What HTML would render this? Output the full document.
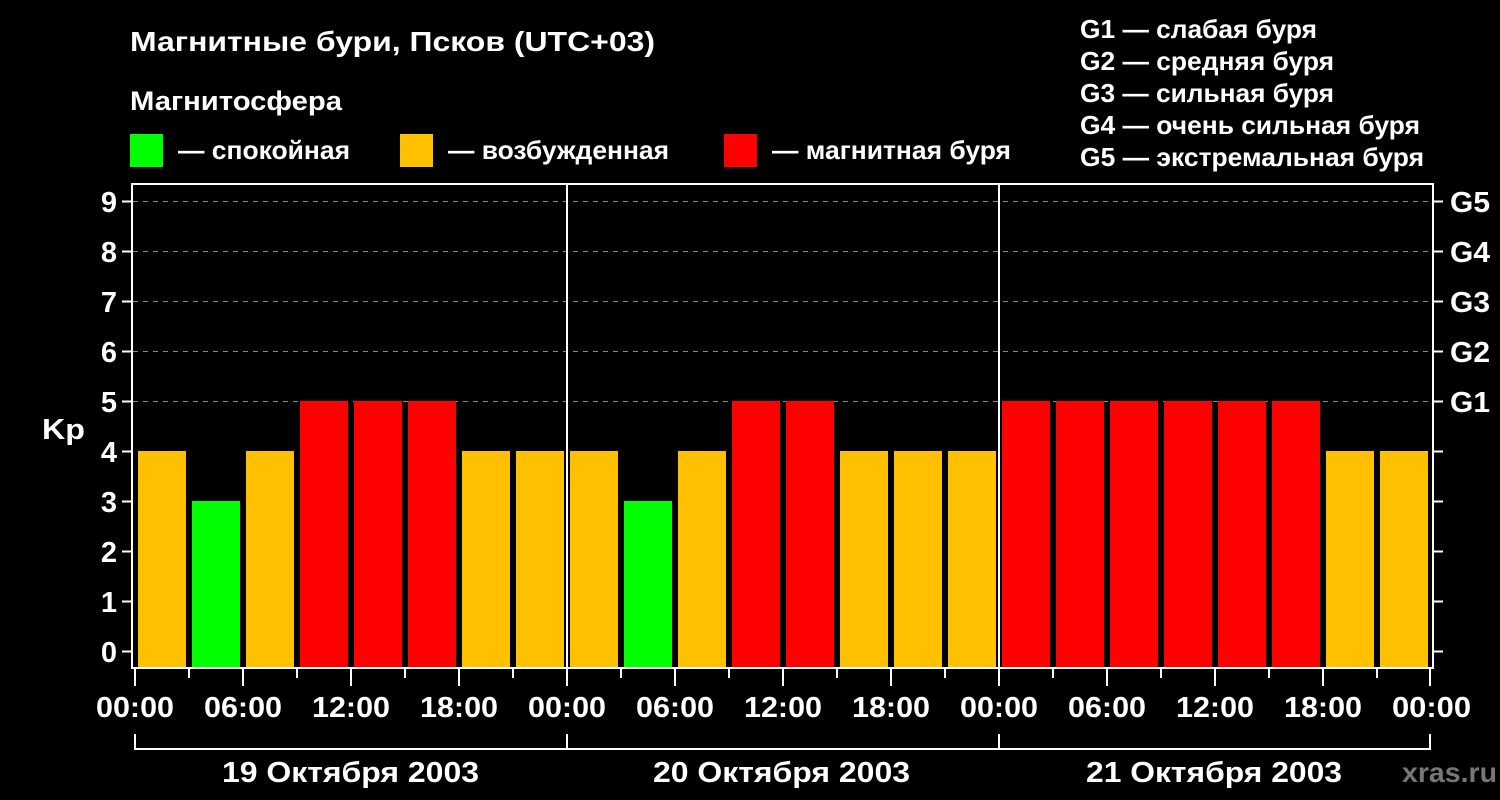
<!DOCTYPE html>
<html><head><meta charset="utf-8"><style>
html,body{margin:0;padding:0;background:#000;}
svg{display:block;font-family:"Liberation Sans",Arial,sans-serif;font-weight:bold;}
</style></head><body>
<svg width="1500" height="800" viewBox="0 0 1500 800" xmlns="http://www.w3.org/2000/svg">
<rect width="1500" height="800" fill="#000"/>
<g fill="#fff">
<text x="130" y="51" font-size="28" textLength="525" lengthAdjust="spacingAndGlyphs">Магнитные бури, Псков (UTC+03)</text>
<text x="130" y="110" font-size="27" textLength="212" lengthAdjust="spacingAndGlyphs">Магнитосфера</text>
<text x="178" y="159" font-size="26" textLength="172" lengthAdjust="spacingAndGlyphs">— спокойная</text>
<text x="448" y="159" font-size="26" textLength="221" lengthAdjust="spacingAndGlyphs">— возбужденная</text>
<text x="772" y="159" font-size="26" textLength="239" lengthAdjust="spacingAndGlyphs">— магнитная буря</text>
<g font-size="26">
<text x="1080" y="38" textLength="237" lengthAdjust="spacingAndGlyphs">G1 — слабая буря</text>
<text x="1080" y="70" textLength="254" lengthAdjust="spacingAndGlyphs">G2 — средняя буря</text>
<text x="1080" y="102" textLength="254" lengthAdjust="spacingAndGlyphs">G3 — сильная буря</text>
<text x="1080" y="134" textLength="340" lengthAdjust="spacingAndGlyphs">G4 — очень сильная буря</text>
<text x="1080" y="166" textLength="344" lengthAdjust="spacingAndGlyphs">G5 — экстремальная буря</text>
</g>
</g>
<rect x="130" y="134" width="33" height="33" fill="#00ff00"/>
<rect x="400" y="134" width="33" height="33" fill="#ffc000"/>
<rect x="724" y="134" width="33" height="33" fill="#ff0000"/>
<g stroke="#888" stroke-width="1" stroke-dasharray="5,5">
<line x1="133" y1="201.5" x2="1432" y2="201.5"/>
<line x1="133" y1="251.5" x2="1432" y2="251.5"/>
<line x1="133" y1="301.5" x2="1432" y2="301.5"/>
<line x1="133" y1="351.5" x2="1432" y2="351.5"/>
<line x1="133" y1="401.5" x2="1432" y2="401.5"/>
</g>
<g>
<rect x="138" y="451" width="48" height="216" fill="#ffc000"/>
<rect x="192" y="501" width="48" height="166" fill="#00ff00"/>
<rect x="246" y="451" width="48" height="216" fill="#ffc000"/>
<rect x="300" y="401" width="48" height="266" fill="#ff0000"/>
<rect x="354" y="401" width="48" height="266" fill="#ff0000"/>
<rect x="408" y="401" width="48" height="266" fill="#ff0000"/>
<rect x="462" y="451" width="48" height="216" fill="#ffc000"/>
<rect x="516" y="451" width="48" height="216" fill="#ffc000"/>
<rect x="570" y="451" width="48" height="216" fill="#ffc000"/>
<rect x="624" y="501" width="48" height="166" fill="#00ff00"/>
<rect x="678" y="451" width="48" height="216" fill="#ffc000"/>
<rect x="732" y="401" width="48" height="266" fill="#ff0000"/>
<rect x="786" y="401" width="48" height="266" fill="#ff0000"/>
<rect x="840" y="451" width="48" height="216" fill="#ffc000"/>
<rect x="894" y="451" width="48" height="216" fill="#ffc000"/>
<rect x="948" y="451" width="48" height="216" fill="#ffc000"/>
<rect x="1002" y="401" width="48" height="266" fill="#ff0000"/>
<rect x="1056" y="401" width="48" height="266" fill="#ff0000"/>
<rect x="1110" y="401" width="48" height="266" fill="#ff0000"/>
<rect x="1164" y="401" width="48" height="266" fill="#ff0000"/>
<rect x="1218" y="401" width="48" height="266" fill="#ff0000"/>
<rect x="1272" y="401" width="48" height="266" fill="#ff0000"/>
<rect x="1326" y="451" width="48" height="216" fill="#ffc000"/>
<rect x="1380" y="451" width="48" height="216" fill="#ffc000"/>
</g>
<g stroke="#fff" stroke-width="2" fill="none">
<rect x="132" y="184" width="1301" height="484"/>
<line x1="567" y1="184" x2="567" y2="668"/>
<line x1="999" y1="184" x2="999" y2="668"/>
<path d="M122 201.5H132M122 251.5H132M122 301.5H132M122 351.5H132M122 401.5H132M122 451.5H132M122 501.5H132M122 551.5H132M122 601.5H132M122 651.5H132"/>
<path d="M1433 201.5H1443M1433 251.5H1443M1433 301.5H1443M1433 351.5H1443M1433 401.5H1443M1433 451.5H1443M1433 501.5H1443M1433 551.5H1443M1433 601.5H1443M1433 651.5H1443"/>
<path d="M135 668V686M243 668V686M351 668V686M459 668V686M567 668V686M675 668V686M783 668V686M891 668V686M999 668V686M1107 668V686M1215 668V686M1323 668V686M1430 668V686"/>
<path d="M189 668V678M297 668V678M405 668V678M513 668V678M621 668V678M729 668V678M837 668V678M945 668V678M1053 668V678M1161 668V678M1269 668V678M1377 668V678"/>
<path d="M135 734V750M567 734V750M999 734V750M1430 734V750M135 749H1430"/>
</g>
<g fill="#fff" font-size="29" text-anchor="end">
<text x="117" y="212">9</text><text x="117" y="262">8</text><text x="117" y="312">7</text>
<text x="117" y="362">6</text><text x="117" y="412">5</text><text x="117" y="462">4</text>
<text x="117" y="512">3</text><text x="117" y="562">2</text><text x="117" y="612">1</text>
<text x="117" y="662">0</text>
</g>
<text x="42" y="439" fill="#fff" font-size="29" textLength="43" lengthAdjust="spacingAndGlyphs">Kp</text>
<g fill="#fff" font-size="29">
<text x="1450" y="212" textLength="40" lengthAdjust="spacingAndGlyphs">G5</text>
<text x="1450" y="262" textLength="40" lengthAdjust="spacingAndGlyphs">G4</text>
<text x="1450" y="312" textLength="40" lengthAdjust="spacingAndGlyphs">G3</text>
<text x="1450" y="362" textLength="40" lengthAdjust="spacingAndGlyphs">G2</text>
<text x="1450" y="412" textLength="40" lengthAdjust="spacingAndGlyphs">G1</text>
</g>
<g fill="#fff" font-size="29">
<text x="96" y="717" textLength="78" lengthAdjust="spacingAndGlyphs">00:00</text>
<text x="204" y="717" textLength="78" lengthAdjust="spacingAndGlyphs">06:00</text>
<text x="312" y="717" textLength="78" lengthAdjust="spacingAndGlyphs">12:00</text>
<text x="420" y="717" textLength="78" lengthAdjust="spacingAndGlyphs">18:00</text>
<text x="528" y="717" textLength="78" lengthAdjust="spacingAndGlyphs">00:00</text>
<text x="636" y="717" textLength="78" lengthAdjust="spacingAndGlyphs">06:00</text>
<text x="744" y="717" textLength="78" lengthAdjust="spacingAndGlyphs">12:00</text>
<text x="852" y="717" textLength="78" lengthAdjust="spacingAndGlyphs">18:00</text>
<text x="960" y="717" textLength="78" lengthAdjust="spacingAndGlyphs">00:00</text>
<text x="1068" y="717" textLength="78" lengthAdjust="spacingAndGlyphs">06:00</text>
<text x="1176" y="717" textLength="78" lengthAdjust="spacingAndGlyphs">12:00</text>
<text x="1284" y="717" textLength="78" lengthAdjust="spacingAndGlyphs">18:00</text>
<text x="1392" y="717" textLength="79" lengthAdjust="spacingAndGlyphs">00:00</text>
<text x="222" y="782" textLength="257" lengthAdjust="spacingAndGlyphs">19 Октября 2003</text>
<text x="653" y="782" textLength="257" lengthAdjust="spacingAndGlyphs">20 Октября 2003</text>
<text x="1086" y="782" textLength="256" lengthAdjust="spacingAndGlyphs">21 Октября 2003</text>
</g>
<text x="1402" y="782" fill="#777" font-size="28" textLength="95" lengthAdjust="spacingAndGlyphs">xras.ru</text>
</svg>
</body></html>
